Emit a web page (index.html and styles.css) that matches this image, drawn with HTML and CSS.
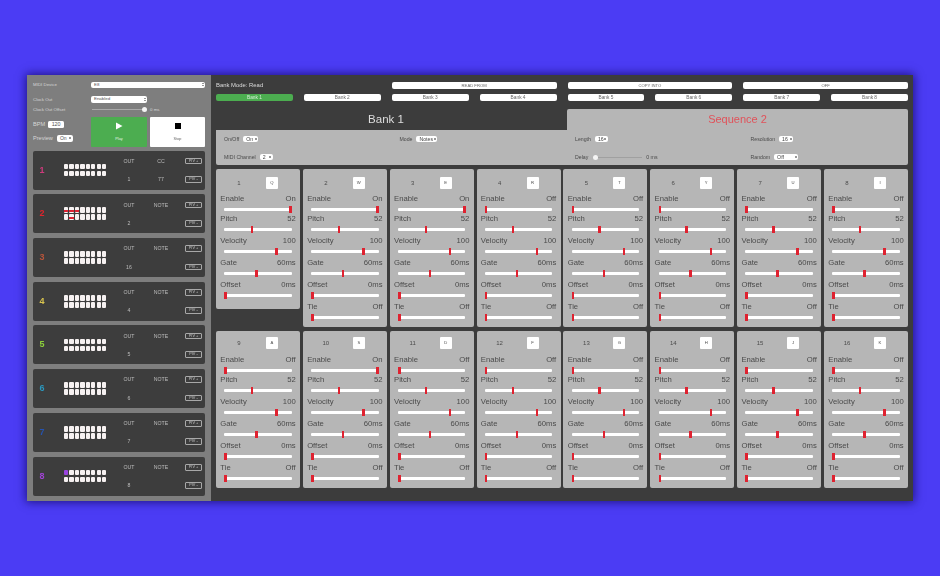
FILE: index.html
```html
<!DOCTYPE html>
<html lang="en">
<head>
<meta charset="utf-8">
<title>Sequencer</title>
<link rel="stylesheet" href="styles.css">
</head>
<body>
<div class="window">
<aside class="sidebar">
  <div class="set s1"><span class="set-label">MIDI Device</span><span class="sel wide">E8<b class="arr"></b></span></div>
  <div class="set s2"><span class="set-label">Clock Out</span><span class="sel w56">Enabled<b class="arr"></b></span></div>
  <div class="set s3"><span class="set-label">Clock Out Offset</span><span class="mini-track"><i class="knob end"></i></span><span class="ms">0 ms</span></div>
  <div class="transport">
    <div class="tempo">
      <div class="tempo-row"><span>BPM</span><span class="field">120</span></div>
      <div class="tempo-row"><span>Preview</span><span class="sel w16">On<b class="arr"></b></span></div>
    </div>
    <div class="tbtn play"><svg class="ticon" viewBox="0 0 8 8"><path d="M1 0.5 L7.5 4 L1 7.5 Z" fill="#fff"/></svg><span>Play</span></div>
    <div class="tbtn stop"><svg class="ticon" viewBox="0 0 8 8"><rect x="1" y="1" width="6" height="6" fill="#000"/></svg><span>Stop</span></div>
  </div>
  <div class="seqs">
    <div class="seq"><span class="num n1">1</span><div class="cells"><i></i><i></i><i></i><i></i><i></i><i></i><i></i><i></i><i></i><i></i><i></i><i></i><i></i><i></i><i></i><i></i></div><div class="col"><span>OUT</span><span>1</span></div><div class="col"><span>CC</span><span>77</span></div><div class="col piv"><span>PIV +</span><span>PIV -</span></div></div>
    <div class="seq"><span class="num n2">2</span><div class="cells"><i class="red"></i><i class="red"></i><i class="red"></i><i></i><i></i><i></i><i></i><i></i><i></i><i class="red"></i><i></i><i></i><i></i><i></i><i></i><i></i></div><div class="col"><span>OUT</span><span>2</span></div><div class="col"><span>NOTE</span><span></span></div><div class="col piv"><span>PIV +</span><span>PIV -</span></div></div>
    <div class="seq"><span class="num n3">3</span><div class="cells"><i></i><i></i><i></i><i></i><i></i><i></i><i></i><i></i><i></i><i></i><i></i><i></i><i></i><i></i><i></i><i></i></div><div class="col"><span>OUT</span><span>16</span></div><div class="col"><span>NOTE</span><span></span></div><div class="col piv"><span>PIV +</span><span>PIV -</span></div></div>
    <div class="seq"><span class="num n4">4</span><div class="cells"><i></i><i></i><i></i><i></i><i></i><i></i><i></i><i></i><i></i><i></i><i></i><i></i><i></i><i></i><i></i><i></i></div><div class="col"><span>OUT</span><span>4</span></div><div class="col"><span>NOTE</span><span></span></div><div class="col piv"><span>PIV +</span><span>PIV -</span></div></div>
    <div class="seq"><span class="num n5">5</span><div class="cells"><i></i><i></i><i></i><i></i><i></i><i></i><i></i><i></i><i></i><i></i><i></i><i></i><i></i><i></i><i></i><i></i></div><div class="col"><span>OUT</span><span>5</span></div><div class="col"><span>NOTE</span><span></span></div><div class="col piv"><span>PIV +</span><span>PIV -</span></div></div>
    <div class="seq"><span class="num n6">6</span><div class="cells"><i></i><i></i><i></i><i></i><i></i><i></i><i></i><i></i><i></i><i></i><i></i><i></i><i></i><i></i><i></i><i></i></div><div class="col"><span>OUT</span><span>6</span></div><div class="col"><span>NOTE</span><span></span></div><div class="col piv"><span>PIV +</span><span>PIV -</span></div></div>
    <div class="seq"><span class="num n7">7</span><div class="cells"><i></i><i></i><i></i><i></i><i></i><i></i><i></i><i></i><i></i><i></i><i></i><i></i><i></i><i></i><i></i><i></i></div><div class="col"><span>OUT</span><span>7</span></div><div class="col"><span>NOTE</span><span></span></div><div class="col piv"><span>PIV +</span><span>PIV -</span></div></div>
    <div class="seq"><span class="num n8">8</span><div class="cells"><i class="purple"></i><i></i><i></i><i></i><i></i><i></i><i></i><i></i><i></i><i></i><i></i><i></i><i></i><i></i><i></i><i></i></div><div class="col"><span>OUT</span><span>8</span></div><div class="col"><span>NOTE</span><span></span></div><div class="col piv"><span>PIV +</span><span>PIV -</span></div></div>
  </div>
</aside>
<main class="main">
  <div class="banks">
    <span class="mode span2">Bank Mode: Read</span>
    <span class="bk small span2">READ FROM</span><span class="bk small span2">COPY INTO</span><span class="bk small span2">OFF</span>
    <span class="bk active">Bank 1</span><span class="bk">Bank 2</span><span class="bk">Bank 3</span><span class="bk">Bank 4</span><span class="bk">Bank 5</span><span class="bk">Bank 6</span><span class="bk">Bank 7</span><span class="bk">Bank 8</span>
  </div>
  <div class="tabs"><div class="tab">Bank 1</div><div class="tab current">Sequence 2</div></div>
  <div class="panel">
    <div class="opt"><span>On/Off</span><span class="sel w15">On<b class="arr"></b></span></div>
    <div class="opt"><span>Mode</span><span class="sel w21">Notes<b class="arr"></b></span></div>
    <div class="opt"><span>Length</span><span class="sel w13">16<b class="arr"></b></span></div>
    <div class="opt"><span>Resolution</span><span class="sel w14">16<b class="arr"></b></span></div>
    <div class="opt"><span>MIDI Channel</span><span class="sel w13">2<b class="arr"></b></span></div>
    <div class="opt"></div>
    <div class="opt"><span>Delay</span><span class="mini-track delay"><i class="knob"></i></span><span class="ms dark">0 ms</span></div>
    <div class="opt"><span>Random</span><span class="sel w24">Off<b class="arr"></b></span></div>
  </div>
  <div class="steps">
    <section class="step short"><header class="step-head"><span>1</span><span class="key">Q</span></header>
      <div class="row enable"><div class="head"><span>Enable</span><span>On</span></div><div class="track"><i class="thumb on"></i></div></div>
      <div class="row"><div class="head"><span>Pitch</span><span>52</span></div><div class="track"><i class="thumb pitch"></i></div></div>
      <div class="row"><div class="head"><span>Velocity</span><span>100</span></div><div class="track"><i class="thumb vel"></i></div></div>
      <div class="row"><div class="head"><span>Gate</span><span>60ms</span></div><div class="track"><i class="thumb gate"></i></div></div>
      <div class="row"><div class="head"><span>Offset</span><span>0ms</span></div><div class="track"><i class="thumb"></i></div></div>
    </section>
    <section class="step"><header class="step-head"><span>2</span><span class="key">W</span></header>
      <div class="row enable"><div class="head"><span>Enable</span><span>On</span></div><div class="track"><i class="thumb on"></i></div></div>
      <div class="row"><div class="head"><span>Pitch</span><span>52</span></div><div class="track"><i class="thumb pitch"></i></div></div>
      <div class="row"><div class="head"><span>Velocity</span><span>100</span></div><div class="track"><i class="thumb vel"></i></div></div>
      <div class="row"><div class="head"><span>Gate</span><span>60ms</span></div><div class="track"><i class="thumb gate"></i></div></div>
      <div class="row"><div class="head"><span>Offset</span><span>0ms</span></div><div class="track"><i class="thumb"></i></div></div>
      <div class="row"><div class="head"><span>Tie</span><span>Off</span></div><div class="track"><i class="thumb"></i></div></div>
    </section>
    <section class="step"><header class="step-head"><span>3</span><span class="key">E</span></header>
      <div class="row enable"><div class="head"><span>Enable</span><span>On</span></div><div class="track"><i class="thumb on"></i></div></div>
      <div class="row"><div class="head"><span>Pitch</span><span>52</span></div><div class="track"><i class="thumb pitch"></i></div></div>
      <div class="row"><div class="head"><span>Velocity</span><span>100</span></div><div class="track"><i class="thumb vel"></i></div></div>
      <div class="row"><div class="head"><span>Gate</span><span>60ms</span></div><div class="track"><i class="thumb gate"></i></div></div>
      <div class="row"><div class="head"><span>Offset</span><span>0ms</span></div><div class="track"><i class="thumb"></i></div></div>
      <div class="row"><div class="head"><span>Tie</span><span>Off</span></div><div class="track"><i class="thumb"></i></div></div>
    </section>
    <section class="step"><header class="step-head"><span>4</span><span class="key">R</span></header>
      <div class="row enable"><div class="head"><span>Enable</span><span>Off</span></div><div class="track"><i class="thumb"></i></div></div>
      <div class="row"><div class="head"><span>Pitch</span><span>52</span></div><div class="track"><i class="thumb pitch"></i></div></div>
      <div class="row"><div class="head"><span>Velocity</span><span>100</span></div><div class="track"><i class="thumb vel"></i></div></div>
      <div class="row"><div class="head"><span>Gate</span><span>60ms</span></div><div class="track"><i class="thumb gate"></i></div></div>
      <div class="row"><div class="head"><span>Offset</span><span>0ms</span></div><div class="track"><i class="thumb"></i></div></div>
      <div class="row"><div class="head"><span>Tie</span><span>Off</span></div><div class="track"><i class="thumb"></i></div></div>
    </section>
    <section class="step"><header class="step-head"><span>5</span><span class="key">T</span></header>
      <div class="row enable"><div class="head"><span>Enable</span><span>Off</span></div><div class="track"><i class="thumb"></i></div></div>
      <div class="row"><div class="head"><span>Pitch</span><span>52</span></div><div class="track"><i class="thumb pitch"></i></div></div>
      <div class="row"><div class="head"><span>Velocity</span><span>100</span></div><div class="track"><i class="thumb vel"></i></div></div>
      <div class="row"><div class="head"><span>Gate</span><span>60ms</span></div><div class="track"><i class="thumb gate"></i></div></div>
      <div class="row"><div class="head"><span>Offset</span><span>0ms</span></div><div class="track"><i class="thumb"></i></div></div>
      <div class="row"><div class="head"><span>Tie</span><span>Off</span></div><div class="track"><i class="thumb"></i></div></div>
    </section>
    <section class="step"><header class="step-head"><span>6</span><span class="key">Y</span></header>
      <div class="row enable"><div class="head"><span>Enable</span><span>Off</span></div><div class="track"><i class="thumb"></i></div></div>
      <div class="row"><div class="head"><span>Pitch</span><span>52</span></div><div class="track"><i class="thumb pitch"></i></div></div>
      <div class="row"><div class="head"><span>Velocity</span><span>100</span></div><div class="track"><i class="thumb vel"></i></div></div>
      <div class="row"><div class="head"><span>Gate</span><span>60ms</span></div><div class="track"><i class="thumb gate"></i></div></div>
      <div class="row"><div class="head"><span>Offset</span><span>0ms</span></div><div class="track"><i class="thumb"></i></div></div>
      <div class="row"><div class="head"><span>Tie</span><span>Off</span></div><div class="track"><i class="thumb"></i></div></div>
    </section>
    <section class="step"><header class="step-head"><span>7</span><span class="key">U</span></header>
      <div class="row enable"><div class="head"><span>Enable</span><span>Off</span></div><div class="track"><i class="thumb"></i></div></div>
      <div class="row"><div class="head"><span>Pitch</span><span>52</span></div><div class="track"><i class="thumb pitch"></i></div></div>
      <div class="row"><div class="head"><span>Velocity</span><span>100</span></div><div class="track"><i class="thumb vel"></i></div></div>
      <div class="row"><div class="head"><span>Gate</span><span>60ms</span></div><div class="track"><i class="thumb gate"></i></div></div>
      <div class="row"><div class="head"><span>Offset</span><span>0ms</span></div><div class="track"><i class="thumb"></i></div></div>
      <div class="row"><div class="head"><span>Tie</span><span>Off</span></div><div class="track"><i class="thumb"></i></div></div>
    </section>
    <section class="step"><header class="step-head"><span>8</span><span class="key">I</span></header>
      <div class="row enable"><div class="head"><span>Enable</span><span>Off</span></div><div class="track"><i class="thumb"></i></div></div>
      <div class="row"><div class="head"><span>Pitch</span><span>52</span></div><div class="track"><i class="thumb pitch"></i></div></div>
      <div class="row"><div class="head"><span>Velocity</span><span>100</span></div><div class="track"><i class="thumb vel"></i></div></div>
      <div class="row"><div class="head"><span>Gate</span><span>60ms</span></div><div class="track"><i class="thumb gate"></i></div></div>
      <div class="row"><div class="head"><span>Offset</span><span>0ms</span></div><div class="track"><i class="thumb"></i></div></div>
      <div class="row"><div class="head"><span>Tie</span><span>Off</span></div><div class="track"><i class="thumb"></i></div></div>
    </section>
    <section class="step lower"><header class="step-head"><span>9</span><span class="key">A</span></header>
      <div class="row enable"><div class="head"><span>Enable</span><span>Off</span></div><div class="track"><i class="thumb"></i></div></div>
      <div class="row"><div class="head"><span>Pitch</span><span>52</span></div><div class="track"><i class="thumb pitch"></i></div></div>
      <div class="row"><div class="head"><span>Velocity</span><span>100</span></div><div class="track"><i class="thumb vel"></i></div></div>
      <div class="row"><div class="head"><span>Gate</span><span>60ms</span></div><div class="track"><i class="thumb gate"></i></div></div>
      <div class="row"><div class="head"><span>Offset</span><span>0ms</span></div><div class="track"><i class="thumb"></i></div></div>
      <div class="row"><div class="head"><span>Tie</span><span>Off</span></div><div class="track"><i class="thumb"></i></div></div>
    </section>
    <section class="step lower"><header class="step-head"><span>10</span><span class="key">S</span></header>
      <div class="row enable"><div class="head"><span>Enable</span><span>On</span></div><div class="track"><i class="thumb on"></i></div></div>
      <div class="row"><div class="head"><span>Pitch</span><span>52</span></div><div class="track"><i class="thumb pitch"></i></div></div>
      <div class="row"><div class="head"><span>Velocity</span><span>100</span></div><div class="track"><i class="thumb vel"></i></div></div>
      <div class="row"><div class="head"><span>Gate</span><span>60ms</span></div><div class="track"><i class="thumb gate"></i></div></div>
      <div class="row"><div class="head"><span>Offset</span><span>0ms</span></div><div class="track"><i class="thumb"></i></div></div>
      <div class="row"><div class="head"><span>Tie</span><span>Off</span></div><div class="track"><i class="thumb"></i></div></div>
    </section>
    <section class="step lower"><header class="step-head"><span>11</span><span class="key">D</span></header>
      <div class="row enable"><div class="head"><span>Enable</span><span>Off</span></div><div class="track"><i class="thumb"></i></div></div>
      <div class="row"><div class="head"><span>Pitch</span><span>52</span></div><div class="track"><i class="thumb pitch"></i></div></div>
      <div class="row"><div class="head"><span>Velocity</span><span>100</span></div><div class="track"><i class="thumb vel"></i></div></div>
      <div class="row"><div class="head"><span>Gate</span><span>60ms</span></div><div class="track"><i class="thumb gate"></i></div></div>
      <div class="row"><div class="head"><span>Offset</span><span>0ms</span></div><div class="track"><i class="thumb"></i></div></div>
      <div class="row"><div class="head"><span>Tie</span><span>Off</span></div><div class="track"><i class="thumb"></i></div></div>
    </section>
    <section class="step lower"><header class="step-head"><span>12</span><span class="key">F</span></header>
      <div class="row enable"><div class="head"><span>Enable</span><span>Off</span></div><div class="track"><i class="thumb"></i></div></div>
      <div class="row"><div class="head"><span>Pitch</span><span>52</span></div><div class="track"><i class="thumb pitch"></i></div></div>
      <div class="row"><div class="head"><span>Velocity</span><span>100</span></div><div class="track"><i class="thumb vel"></i></div></div>
      <div class="row"><div class="head"><span>Gate</span><span>60ms</span></div><div class="track"><i class="thumb gate"></i></div></div>
      <div class="row"><div class="head"><span>Offset</span><span>0ms</span></div><div class="track"><i class="thumb"></i></div></div>
      <div class="row"><div class="head"><span>Tie</span><span>Off</span></div><div class="track"><i class="thumb"></i></div></div>
    </section>
    <section class="step lower"><header class="step-head"><span>13</span><span class="key">G</span></header>
      <div class="row enable"><div class="head"><span>Enable</span><span>Off</span></div><div class="track"><i class="thumb"></i></div></div>
      <div class="row"><div class="head"><span>Pitch</span><span>52</span></div><div class="track"><i class="thumb pitch"></i></div></div>
      <div class="row"><div class="head"><span>Velocity</span><span>100</span></div><div class="track"><i class="thumb vel"></i></div></div>
      <div class="row"><div class="head"><span>Gate</span><span>60ms</span></div><div class="track"><i class="thumb gate"></i></div></div>
      <div class="row"><div class="head"><span>Offset</span><span>0ms</span></div><div class="track"><i class="thumb"></i></div></div>
      <div class="row"><div class="head"><span>Tie</span><span>Off</span></div><div class="track"><i class="thumb"></i></div></div>
    </section>
    <section class="step lower"><header class="step-head"><span>14</span><span class="key">H</span></header>
      <div class="row enable"><div class="head"><span>Enable</span><span>Off</span></div><div class="track"><i class="thumb"></i></div></div>
      <div class="row"><div class="head"><span>Pitch</span><span>52</span></div><div class="track"><i class="thumb pitch"></i></div></div>
      <div class="row"><div class="head"><span>Velocity</span><span>100</span></div><div class="track"><i class="thumb vel"></i></div></div>
      <div class="row"><div class="head"><span>Gate</span><span>60ms</span></div><div class="track"><i class="thumb gate"></i></div></div>
      <div class="row"><div class="head"><span>Offset</span><span>0ms</span></div><div class="track"><i class="thumb"></i></div></div>
      <div class="row"><div class="head"><span>Tie</span><span>Off</span></div><div class="track"><i class="thumb"></i></div></div>
    </section>
    <section class="step lower"><header class="step-head"><span>15</span><span class="key">J</span></header>
      <div class="row enable"><div class="head"><span>Enable</span><span>Off</span></div><div class="track"><i class="thumb"></i></div></div>
      <div class="row"><div class="head"><span>Pitch</span><span>52</span></div><div class="track"><i class="thumb pitch"></i></div></div>
      <div class="row"><div class="head"><span>Velocity</span><span>100</span></div><div class="track"><i class="thumb vel"></i></div></div>
      <div class="row"><div class="head"><span>Gate</span><span>60ms</span></div><div class="track"><i class="thumb gate"></i></div></div>
      <div class="row"><div class="head"><span>Offset</span><span>0ms</span></div><div class="track"><i class="thumb"></i></div></div>
      <div class="row"><div class="head"><span>Tie</span><span>Off</span></div><div class="track"><i class="thumb"></i></div></div>
    </section>
    <section class="step lower"><header class="step-head"><span>16</span><span class="key">K</span></header>
      <div class="row enable"><div class="head"><span>Enable</span><span>Off</span></div><div class="track"><i class="thumb"></i></div></div>
      <div class="row"><div class="head"><span>Pitch</span><span>52</span></div><div class="track"><i class="thumb pitch"></i></div></div>
      <div class="row"><div class="head"><span>Velocity</span><span>100</span></div><div class="track"><i class="thumb vel"></i></div></div>
      <div class="row"><div class="head"><span>Gate</span><span>60ms</span></div><div class="track"><i class="thumb gate"></i></div></div>
      <div class="row"><div class="head"><span>Offset</span><span>0ms</span></div><div class="track"><i class="thumb"></i></div></div>
      <div class="row"><div class="head"><span>Tie</span><span>Off</span></div><div class="track"><i class="thumb"></i></div></div>
    </section>
  </div>
</main>
</div>
</body>
</html>
```
FILE: styles.css
```css
* { box-sizing: border-box; }
html, body { margin: 0; height: 100%; }
body {
  width: 940px;
  height: 576px;
  overflow: hidden;
  padding: 75px 27px 75px 27px;
  background: #4b3cf4;
  font-family: "Liberation Sans", Arial, sans-serif;
}
.window {
  display: flex;
  width: 886px;
  height: 426px;
  background: #3c3c3c;
  box-shadow: 0 0 9px 1px rgba(15, 5, 90, 0.75);
  filter: blur(0.35px);
}

/* sidebar */
.sidebar {
  width: 184px;
  flex: none;
  padding: 6.5px 6px 0;
  background: #7e7e7e;
  color: #d6d6d6;
  font-size: 4.4px;
}
.set { display: flex; align-items: center; height: 6.5px; }
.set-label { width: 58px; flex: none; }
.s2 { margin-top: 8px; }
.s3 { margin-top: 3.5px; }
.sel {
  display: inline-flex;
  align-items: center;
  justify-content: space-between;
  height: 6.5px;
  padding: 0 1.5px 0 3px;
  border-radius: 2px;
  background: #fff;
  color: #555;
  font-size: 4.4px;
  line-height: 6.5px;
}
.arr {
  display: flex;
  flex-direction: column;
  gap: 0.6px;
  flex: none;
}
.arr::before, .arr::after {
  content: "";
  width: 0;
  height: 0;
  border-left: 1.1px solid transparent;
  border-right: 1.1px solid transparent;
}
.arr::before { border-bottom: 1.5px solid #333; }
.arr::after { border-top: 1.5px solid #333; }
.wide { flex: 1; }
.w56 { width: 56px; }
.w16 { width: 16px; height: 7px; margin-left: 4px; font-size: 5px; }
.w15 { width: 15px; margin-left: 4px; }
.w21 { width: 21px; margin-left: 4px; }
.w13 { width: 13px; margin-left: 4px; }
.w14 { width: 14px; margin-left: 4px; }
.w24 { width: 24px; margin-left: 4px; }
.mini-track {
  position: relative;
  display: block;
  width: 53px;
  height: 1px;
  margin-left: 1px;
  background: #a9a9a9;
}
.knob {
  position: absolute;
  top: -2px;
  left: 0;
  width: 5px;
  height: 5px;
  border-radius: 50%;
  background: #f4f4f4;
}
.knob.end { left: auto; right: -2px; }
.ms { margin-left: 5px; }
.ms.dark { margin-left: 4px; }
.transport { display: flex; gap: 3px; height: 30px; margin-top: 4px; }
.tempo {
  display: flex;
  flex-direction: column;
  width: 55px;
  padding-top: 4px;
  gap: 7px;
  font-size: 5.6px;
}
.tempo-row { display: flex; align-items: center; height: 7px; }
.field {
  width: 16px;
  height: 7px;
  margin-left: 3px;
  border-radius: 1.5px;
  background: #fff;
  color: #555;
  font-size: 5.4px;
  line-height: 7px;
  text-align: center;
}
.tbtn {
  display: flex;
  flex-direction: column;
  align-items: center;
  padding-top: 5px;
  border-radius: 1px;
  font-size: 3.8px;
}
.play { width: 56px; background: #4cad50; color: #e4f3e4; }
.stop { width: 55px; background: #fff; color: #666; }
.ticon { width: 8px; height: 8px; margin-bottom: 7px; }
.seqs { display: flex; flex-direction: column; gap: 4.72px; margin-top: 4px; }
.seq {
  display: flex;
  height: 39px;
  border-radius: 2px;
  background: #3d3d3d;
}
.num {
  width: 18px;
  flex: none;
  margin-right: 13px;
  font-size: 9px;
  font-weight: 700;
  line-height: 39px;
  text-align: center;
}
.n1 { color: #cf3a7c; }
.n2 { color: #e0242c; }
.n3 { color: #b9553b; }
.n4 { color: #d8c34e; }
.n5 { color: #8ed23c; }
.n6 { color: #2b97bd; }
.n7 { color: #2553b0; }
.n8 { color: #a044d4; }
.cells {
  display: grid;
  grid-template-columns: repeat(8, 4.2px);
  grid-auto-rows: 5.7px;
  gap: 1.4px 1.27px;
  width: 43px;
  margin: 13.2px 6px 0 0;
  align-self: flex-start;
  flex: none;
}
.cells i { display: block; border-radius: 1px; background: #f6f1f1; }
.cells i.red { background: linear-gradient(#f6f1f1 45%, #dc2233 45%, #dc2233 80%, #f6f1f1 80%); }
.cells i.purple { background: #9a44e0; }
.col {
  display: flex;
  flex-direction: column;
  gap: 11.7px;
  width: 32px;
  flex: none;
  padding-top: 7.3px;
  color: #bdbdbd;
  font-size: 5.2px;
  text-align: center;
}
.col span { display: block; height: 6.7px; line-height: 6.7px; }
.col.piv { width: 17px; margin-left: 8px; font-size: 3.8px; color: #c4c4c4; }
.piv span { border: 0.7px solid #a8a8a8; border-radius: 1px; line-height: 5.3px; }

/* main */
.main { flex: 1; min-width: 0; padding: 6.5px 5px 0; }
.banks {
  display: grid;
  grid-template-columns: repeat(8, 1fr);
  grid-auto-rows: 7px;
  gap: 5.5px 11px;
}
.span2 { grid-column: span 2; }
.mode { color: #dcdcdc; font-size: 5.9px; line-height: 7px; }
.bk {
  border-radius: 2px;
  background: #fff;
  color: #666;
  font-size: 4.8px;
  line-height: 7px;
  text-align: center;
}
.bk.small { font-size: 4.2px; }
.bk.active { background: #4cad50; color: #d6efd6; }
.tabs {
  display: grid;
  grid-template-columns: 340px 341px;
  column-gap: 11px;
  height: 21px;
  margin-top: 8px;
}
.tab {
  color: #dedede;
  font-size: 11.5px;
  line-height: 21px;
  text-align: center;
}
.tab.current {
  border-radius: 2px 2px 0 0;
  background: #b6b6b6;
  color: #e0525a;
  font-size: 11px;
}
.panel {
  display: grid;
  grid-template-columns: repeat(4, 175.5px);
  grid-auto-rows: 18px;
  height: 35px;
  padding-left: 8px;
  border-radius: 0 0 2px 2px;
  background: #b6b6b6;
  color: #4a4a4a;
  font-size: 5.2px;
}
.opt { display: flex; align-items: center; }
.opt .sel { color: #444; font-size: 5.2px; }
.mini-track.delay { width: 48px; margin-left: 6px; background: #a0a0a0; }
.delay .knob { left: -1px; }
.steps {
  display: grid;
  grid-template-columns: repeat(8, 1fr);
  grid-template-rows: 158px 157px;
  gap: 4px 2.86px;
  margin-top: 4px;
}
.step {
  padding: 8px 4.3px 0;
  border-radius: 2px;
  background: #b6b6b6;
  color: #4b4b4b;
  font-size: 7.7px;
}
.step.short { height: 140px; }
.step.lower { padding-top: 6px; }
.step-head {
  display: grid;
  grid-template-columns: 37.4px 12px;
  column-gap: 8.3px;
  align-items: center;
  margin-bottom: 5px;
  font-size: 6px;
  text-align: center;
}
.lower .step-head { margin-bottom: 6px; }
.key {
  height: 12px;
  background: #fff;
  border-radius: 1px;
  font-size: 4.2px;
  line-height: 12px;
}
.row { height: 22px; }
.row.enable { height: 20px; }
.head {
  display: flex;
  justify-content: space-between;
  height: 10px;
  line-height: 10px;
}
.track {
  position: relative;
  height: 3px;
  margin: 3.5px 4px 0;
  background: #fff;
  border-radius: 1px;
}
.thumb {
  position: absolute;
  top: -2px;
  left: 0;
  width: 2.5px;
  height: 7px;
  background: #df2230;
}
.thumb.on { left: 96.5%; }
.thumb.pitch { left: 39.6%; }
.thumb.vel { left: 75.6%; }
.thumb.gate { left: 45.7%; }
```
